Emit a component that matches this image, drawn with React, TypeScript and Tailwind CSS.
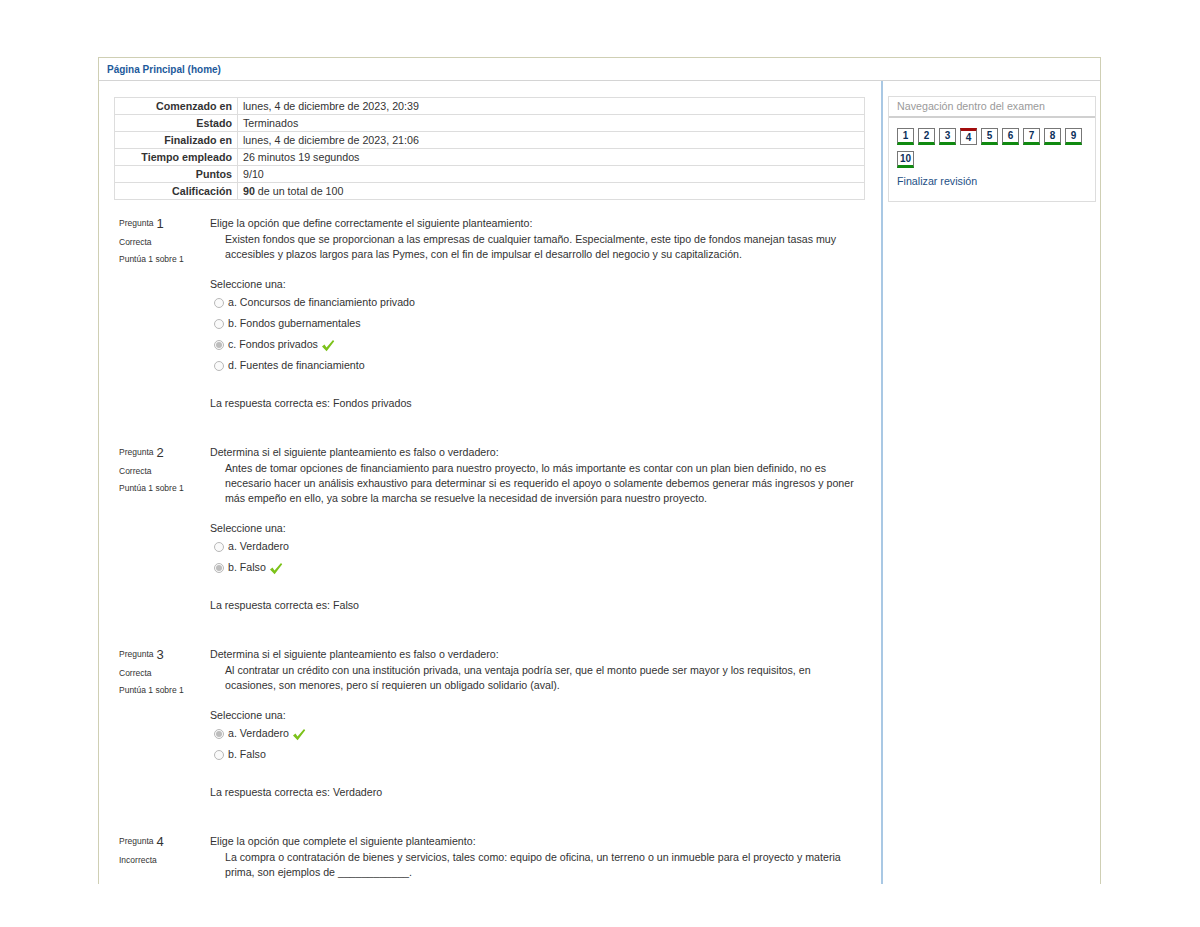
const summary: [string, React.ReactNode][] = [
  ["Comenzado en", "lunes, 4 de diciembre de 2023, 20:39"],
  ["Estado", "Terminados"],
  ["Finalizado en", "lunes, 4 de diciembre de 2023, 21:06"],
  ["Tiempo empleado", "26 minutos 19 segundos"],
  ["Puntos", "9/10"],
  [
    "Calificación",
    <>
      <b>90</b> de un total de 100
    </>,
  ],
];

type Question = {
  n: number;
  state: string;
  score?: string;
  prompt: string;
  statement: string[];
  options?: { label: string; checked?: boolean }[];
  answer?: string;
};

const questions: Question[] = [
  {
    n: 1,
    state: "Correcta",
    score: "Puntúa 1 sobre 1",
    prompt: "Elige la opción que define correctamente el siguiente planteamiento:",
    statement: [
      "Existen fondos que se proporcionan a las empresas de cualquier tamaño. Especialmente, este tipo de fondos manejan tasas muy",
      "accesibles y plazos largos para las Pymes, con el fin de impulsar el desarrollo del negocio y su capitalización.",
    ],
    options: [
      { label: "a. Concursos de financiamiento privado" },
      { label: "b. Fondos gubernamentales" },
      { label: "c. Fondos privados", checked: true },
      { label: "d. Fuentes de financiamiento" },
    ],
    answer: "La respuesta correcta es: Fondos privados",
  },
  {
    n: 2,
    state: "Correcta",
    score: "Puntúa 1 sobre 1",
    prompt: "Determina si el siguiente planteamiento es falso o verdadero:",
    statement: [
      "Antes de tomar opciones de financiamiento para nuestro proyecto, lo más importante es contar con un plan bien definido, no es",
      "necesario hacer un análisis exhaustivo para determinar si es requerido el apoyo o solamente debemos generar más ingresos y poner",
      "más empeño en ello, ya sobre la marcha se resuelve la necesidad de inversión para nuestro proyecto.",
    ],
    options: [{ label: "a. Verdadero" }, { label: "b. Falso", checked: true }],
    answer: "La respuesta correcta es: Falso",
  },
  {
    n: 3,
    state: "Correcta",
    score: "Puntúa 1 sobre 1",
    prompt: "Determina si el siguiente planteamiento es falso o verdadero:",
    statement: [
      "Al contratar un crédito con una institución privada, una ventaja podría ser, que el monto puede ser mayor y los requisitos, en",
      "ocasiones, son menores, pero sí requieren un obligado solidario (aval).",
    ],
    options: [{ label: "a. Verdadero", checked: true }, { label: "b. Falso" }],
    answer: "La respuesta correcta es: Verdadero",
  },
  {
    n: 4,
    state: "Incorrecta",
    prompt: "Elige la opción que complete el siguiente planteamiento:",
    statement: [
      "La compra o contratación de bienes y servicios, tales como: equipo de oficina, un terreno o un inmueble para el proyecto y materia",
      "prima, son ejemplos de ____________.",
    ],
  },
];

const Check = () => (
  <svg width="14" height="13" viewBox="0 0 14 13" className="ml-[3px] mt-[1px]">
    <path d="M1 7.5 L3.5 5.5 L5.5 8.5 L12 1 L13.2 2.2 L5.6 12.2 Z" fill="#7cc21a" />
  </svg>
);

const Radio = ({ checked }: { checked?: boolean }) => (
  <span className="w-[10px] h-[10px] rounded-full border border-[#b8b8b8] bg-[#fafafa] flex items-center justify-center mr-[4px]">
    {checked && <span className="w-[6px] h-[6px] rounded-full bg-[#bdbdbd]" />}
  </span>
);

const QuestionBlock = ({ q }: { q: Question }) => (
  <div className="flex mb-[34px]">
    <div className="w-[96px] shrink-0 pl-[5px] text-[8.5px] text-[#333]">
      <div className="h-[15px] flex items-center">
        Pregunta <span className="text-[13px] ml-[3px] leading-none">{q.n}</span>
      </div>
      <div className="mt-[4px] leading-[15px]">{q.state}</div>
      {q.score && <div className="mt-[2px] leading-[15px]">{q.score}</div>}
    </div>
    <div className="flex-1 text-[10.65px] leading-[15px] text-[#333]">
      <div>{q.prompt}</div>
      <div className="mt-px pl-[15px]">
        {q.statement.map((s) => (
          <div key={s} className="whitespace-nowrap">
            {s}
          </div>
        ))}
      </div>
      {q.options && (
        <>
          <div className="mt-[15px]">Seleccione una:</div>
          <div>
            {q.options.map((o) => (
              <div key={o.label} className="h-[21px] flex items-center pl-[4px]">
                <Radio checked={o.checked} />
                <span>{o.label}</span>
                {o.checked && <Check />}
              </div>
            ))}
          </div>
          <div className="mt-[20px]">{q.answer}</div>
        </>
      )}
    </div>
  </div>
);

const navNums = [1, 2, 3, 4, 5, 6, 7, 8, 9, 10];

export default function App() {
  return (
    <div className="w-[1200px] h-[927px] bg-white pt-[57px] font-['Liberation_Sans',Arial,sans-serif]">
      <div className="ml-[98px] w-[1003px] h-[827px] border-t border-l border-r border-[#cfcfb4] overflow-hidden flex flex-col">
        {/* Breadcrumb */}
        <div className="h-[23px] shrink-0 border-b border-[#d4d4d4] flex items-center pl-[8px]">
          <span className="text-[10px] font-bold text-[#1d5a9b]">Página Principal (home)</span>
        </div>

        <div className="flex flex-1 min-h-0">
          {/* Main column */}
          <div className="w-[784px] shrink-0 border-r-2 border-[#a9c8e4] pl-[15px] pr-[15px] pt-[16px]">
            <table className="w-[751px] border-collapse text-[10.7px] text-[#333] mb-[16px]">
              <tbody>
                {summary.map(([k, v]) => (
                  <tr key={k} className="h-[17px]">
                    <th className="w-[123px] border border-[#dddddd] text-right font-bold pr-[5px] leading-[15px]">
                      {k}
                    </th>
                    <td className="border border-[#dddddd] pl-[5px] leading-[15px]">{v}</td>
                  </tr>
                ))}
              </tbody>
            </table>

            {questions.map((q) => (
              <QuestionBlock key={q.n} q={q} />
            ))}
          </div>

          {/* Right column */}
          <div className="flex-1 pt-[15px] pl-[5px] pr-[9px]">
            <div className="border border-[#dddddd]">
              <div className="h-[21px] border-b-2 border-[#d0d0d0] flex items-center pl-[8px] text-[10.7px] text-[#9a9a9a]">
                Navegación dentro del examen
              </div>
              <div className="px-[8px] pt-[10px] pb-[12px]">
                <div className="flex flex-wrap gap-x-[4px] gap-y-[6px] w-[190px]">
                  {navNums.map((n) => (
                    <div
                      key={n}
                      className={
                        n === 4
                          ? "w-[17px] h-[17px] border border-[#777] border-t-[3px] border-t-[#a30c0c] flex items-center justify-center text-[10px] font-bold text-[#0b2f5a] bg-white"
                          : "w-[17px] h-[17px] border border-[#777] border-b-[3px] border-b-[#108a10] flex items-center justify-center text-[10px] font-bold text-[#0b2f5a] bg-white"
                      }
                    >
                      {n}
                    </div>
                  ))}
                </div>
                <div className="mt-[5px] text-[10.7px] text-[#1d4f86]">Finalizar revisión</div>
              </div>
            </div>
          </div>
        </div>
      </div>
    </div>
  );
}
